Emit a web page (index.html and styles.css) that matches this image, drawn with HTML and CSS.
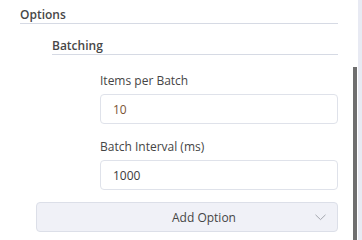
FILE: index.html
```html
<!DOCTYPE html>
<html>
<head>
<meta charset="utf-8">
<link rel="stylesheet" href="styles.css">
</head>
<body>
<div class="page">
  <div class="content">
    <div class="section-title">Options</div>
    <div class="subsection">
      <div class="subsection-title">Batching</div>
      <div class="fields">
        <div class="field">
          <div class="field-label">Items per Batch</div>
          <div class="input number-value">10</div>
        </div>
        <div class="field">
          <div class="field-label">Batch Interval (ms)</div>
          <div class="input">1000</div>
        </div>
      </div>
    </div>
    <div class="add-option">
      <span class="add-option-text">Add Option</span>
      <svg class="chevron" width="11" height="7" viewBox="0 0 11 7"><path d="M0.5 0.8 L5.5 5.6 L10.5 0.8" fill="none" stroke="#a3a6ad" stroke-width="1"/></svg>
    </div>
  </div>
  <div class="scrollbar">
    <div class="scroll-lane"><div class="scroll-thumb"></div></div>
    <div class="scroll-track"></div>
  </div>
</div>
</body>
</html>
```
FILE: styles.css
```css
html, body {
  margin: 0;
  padding: 0;
  background: #ffffff;
}
body {
  font-family: "Open Sans", "Noto Sans", sans-serif;
  font-size: 12px;
  color: #3d3d3d;
}
.page {
  display: flex;
  height: 240px;
  overflow: hidden;
}
.content {
  flex: 1;
  padding: 6px 15px 0 20px;
}
.section-title {
  line-height: 17px;
  font-weight: 600;
  color: #474747;
  border-bottom: 1px solid #d6dae4;
}
.subsection {
  margin-left: 32px;
  margin-top: 13px;
}
.subsection-title {
  line-height: 17px;
  font-weight: 600;
  color: #474747;
  border-bottom: 1px solid #d6dae4;
}
.fields {
  margin-left: 48px;
  margin-top: 17px;
  display: flex;
  flex-direction: column;
  gap: 14px;
}
.field-label {
  line-height: 17px;
  color: #454545;
  margin-bottom: 5px;
}
.input {
  box-sizing: border-box;
  height: 30px;
  border: 1px solid #dfe2ea;
  border-radius: 4px;
  padding: 0 12px;
  display: flex;
  align-items: center;
  color: #3a3a3a;
}
.number-value {
  color: #7a5434;
}
.add-option {
  box-sizing: border-box;
  margin: 12px 0 0 16px;
  height: 30px;
  background: #f0f1f7;
  border: 1px solid #dcdfe8;
  border-radius: 4px;
  display: flex;
  align-items: center;
  justify-content: center;
  padding-left: 34px;
  position: relative;
  color: #454545;
}
.chevron {
  position: absolute;
  right: 11px;
  top: 11px;
}
.scrollbar {
  width: 9px;
  display: flex;
  gap: 1px;
}
.scroll-lane {
  width: 4px;
  padding-top: 67px;
}
.scroll-thumb {
  background: #6f6f6f;
  height: 200px;
}
.scroll-track {
  width: 4px;
  background: #e8eaf3;
}
```
